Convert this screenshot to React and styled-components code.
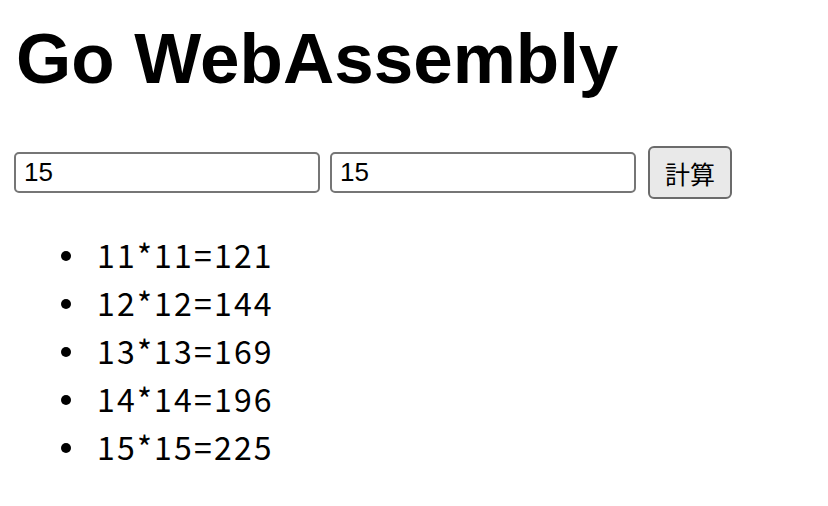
import styled, { createGlobalStyle } from 'styled-components'

const GlobalStyle = createGlobalStyle`
  body {
    margin: 0;
    background: #fff;
    color: #000;
  }
`

const Page = styled.main`
  padding: 17px 16px 0 14px;
`

const Title = styled.h1`
  margin: 0 0 46px 2px;
  font-family: "Liberation Sans", Arial, sans-serif;
  font-weight: 700;
  font-size: 71px;
  line-height: 83px;
`

const Form = styled.div`
  display: flex;
  align-items: center;
  gap: 10px;
`

const NumberInput = styled.input`
  box-sizing: border-box;
  width: 306px;
  height: 41px;
  padding: 0 8px;
  border: 2px solid #767676;
  border-radius: 5px;
  font-family: "Liberation Sans", Arial, sans-serif;
  font-size: 26px;
  color: #000;
  background: #fff;
  outline: none;
`

const CalcButton = styled.button`
  box-sizing: border-box;
  width: 84px;
  height: 53px;
  margin-left: 2px;
  padding: 0;
  border: 2px solid #6b6b6b;
  border-radius: 6px;
  background: #e9e9e9;
  color: #000;
  font-family: "Noto Sans CJK JP", sans-serif;
  font-size: 25px;
`

const Results = styled.ul`
  margin: 31px 0 0;
  padding-left: 83px;
  list-style: none;
  font-family: "Noto Sans CJK JP", "Noto Sans", sans-serif;
  font-weight: 400;
  font-size: 32px;
  line-height: 48px;
`

const Item = styled.li`
  display: flex;
  align-items: center;
  letter-spacing: 2.2px;

  &::before {
    content: "";
    flex: none;
    width: 10px;
    height: 10px;
    margin: 3px 26px 0 -36px;
    border-radius: 50%;
    background: #000;
  }
`

const rows = [11, 12, 13, 14, 15]

export default function App() {
  return (
    <>
      <GlobalStyle />
      <Page>
        <Title>Go WebAssembly</Title>
        <Form>
          <NumberInput type="text" defaultValue="15" />
          <NumberInput type="text" defaultValue="15" />
          <CalcButton>計算</CalcButton>
        </Form>
        <Results>
          {rows.map(n => (
            <Item key={n}>{`${n}*${n}=${n * n}`}</Item>
          ))}
        </Results>
      </Page>
    </>
  )
}
